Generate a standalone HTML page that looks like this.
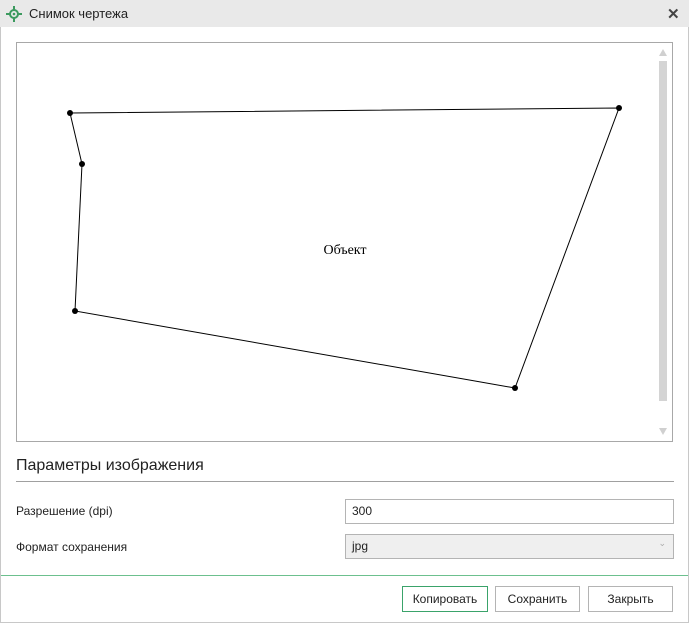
<!DOCTYPE html>
<html><head><meta charset="utf-8"><style>
*{margin:0;padding:0;box-sizing:border-box}
body{width:689px;height:623px;overflow:hidden;background:#fff;font-family:"Segoe UI","Liberation Sans",sans-serif;font-size:12px;color:#222;position:relative}
.win{position:absolute;left:0;top:0;width:689px;height:623px;border:1px solid #c8c8c8;border-top:none}
.title{position:absolute;left:0;top:0;width:689px;height:27px;background:#e9e9e9}
.title span{position:absolute;left:29px;top:6px;font-size:13px;color:#222}
.x{position:absolute;left:667px;top:5px;font-size:15px;font-weight:bold;color:#444}
.canvas{position:absolute;left:16px;top:42px;width:657px;height:400px;border:1px solid #a8a8a8;background:#fff}
.abs{position:absolute}
.inp{position:absolute;left:345px;width:329px;height:25px;border:1px solid #b4b4b4;padding:4px 6px;font-size:12px}
.btn{position:absolute;top:586px;height:26px;border:1px solid #b4b4b4;background:#fff;text-align:center;line-height:24px;font-size:12px}
</style></head><body>
<div class="win"></div>
<div class="title">
<svg class="abs" style="left:6px;top:6px" width="16" height="16" viewBox="0 0 16 16"><g fill="none" stroke="#3c9a5f" stroke-width="2"><circle cx="8" cy="8" r="4"/><path d="M8 0v4M8 12v4M0 8h4M12 8h4"/></g><circle cx="8" cy="8" r="1.3" fill="#3c9a5f"/></svg>
<span>Снимок чертежа</span><div class="x">✕</div></div>
<div class="canvas"></div>
<svg class="abs" style="left:0;top:0" width="689" height="450">
<polygon points="70,113 619,108 515,388 75,311 82,164" fill="none" stroke="#000" stroke-width="1"/>
<g fill="#000"><circle cx="70" cy="113" r="3"/><circle cx="619" cy="108" r="3"/><circle cx="515" cy="388" r="3"/><circle cx="75" cy="311" r="3"/><circle cx="82" cy="164" r="3"/></g>
<text x="345" y="254" text-anchor="middle" font-family="Liberation Serif,serif" font-size="14">Объект</text>
<rect x="659" y="61" width="8" height="340" fill="#d4d4d4"/>
<polygon points="663,49 667,56 659,56" fill="#d0d0d0"/>
<polygon points="659,428 667,428 663,435" fill="#d0d0d0"/>
</svg>
<div class="abs" style="left:16px;top:457px;font-size:16px;color:#222">Параметры изображения</div>
<div class="abs" style="left:16px;top:481px;width:658px;height:1px;background:#a0a0a0"></div>
<div class="abs" style="left:16px;top:504px">Разрешение (dpi)</div>
<div class="abs" style="left:16px;top:540px">Формат сохранения</div>
<div class="inp" style="top:499px">300</div>
<div class="inp" style="top:534px;background:#efefef">jpg<span style="position:absolute;right:7px;top:3px;color:#aaa;font-size:9px">⌄</span></div>
<div class="abs" style="left:1px;top:575px;width:687px;height:1px;background:#6cc08e"></div>
<div class="btn" style="left:402px;width:86px;border-color:#3aa36a">Копировать</div>
<div class="btn" style="left:495px;width:85px">Сохранить</div>
<div class="btn" style="left:588px;width:85px">Закрыть</div>
</body></html>
